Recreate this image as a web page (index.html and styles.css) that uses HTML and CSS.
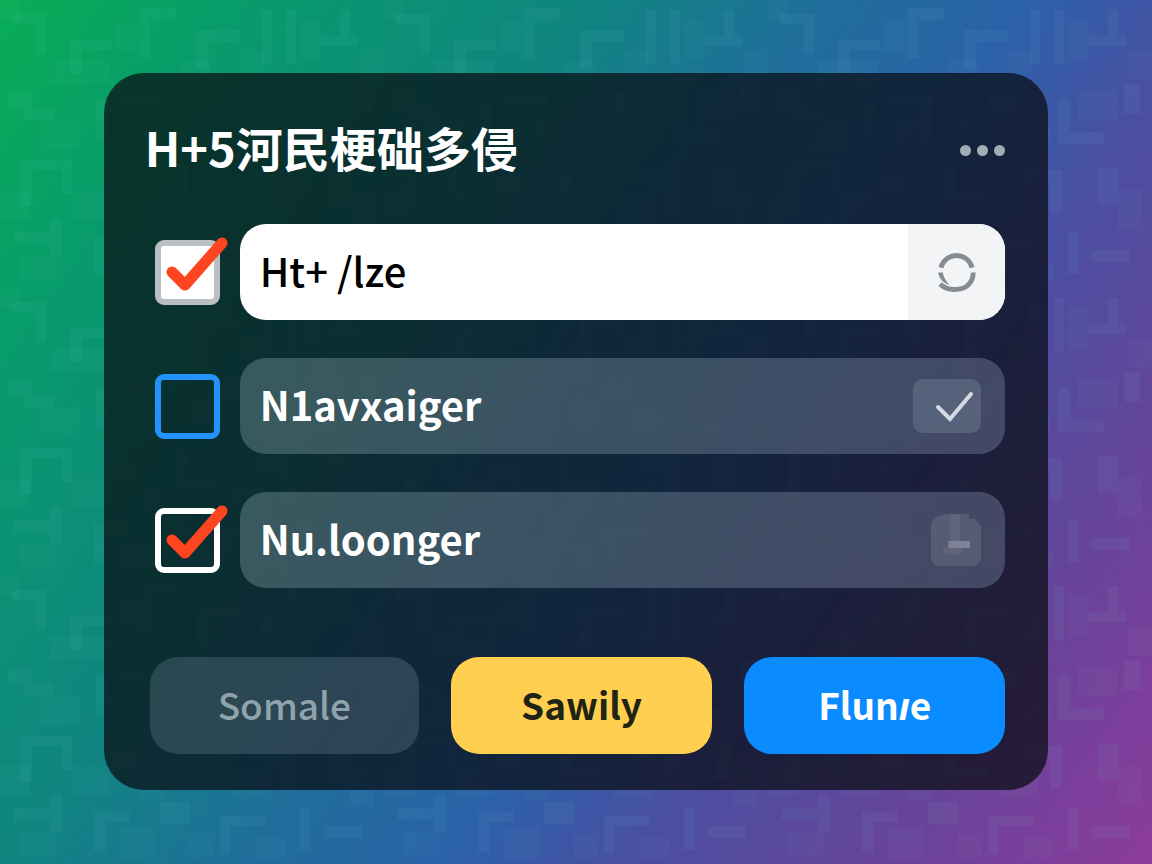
FILE: index.html
```html
<!DOCTYPE html>
<html lang="zh-CN">
<head>
    <meta charset="UTF-8">
    <meta name="viewport" content="width=device-width, initial-scale=1.0">
    <title>H+5河民梗础多侵</title>
    <link rel="stylesheet" href="styles.css">
</head>
<body>
    <!-- Pixel texture behind the card -->
    <svg class="texture" aria-hidden="true" width="100%" height="100%">
        <defs>
            <pattern id="blocks" width="384" height="288" patternUnits="userSpaceOnUse">
                <path opacity=".8" d="M12 14h34v10h-34zM36 24h10v30h-10zM70 40h12v34h-12zM82 40h30v10h-30zM140 8h10v50h-10zM150 8h26v12h-26zM196 30h44v12h-44zM196 42h12v26h-12zM262 10h10v54h-10zM286 10h10v54h-10zM320 36h38v10h-38zM340 10h10v26h-10zM8 92h24v16h-24zM24 108h30v12h-30zM96 100h12v40h-12zM120 96h44v10h-44zM154 106h10v36h-10zM220 92h30v20h-30zM290 100h12v44h-12zM302 132h34v12h-34zM356 84h16v30h-16zM20 160h12v46h-12zM32 160h40v10h-40zM62 170h10v24h-10zM110 176h26v18h-26zM176 164h12v40h-12zM188 192h32v12h-32zM250 170h44v12h-44zM282 182h12v30h-12zM330 168h20v36h-20zM14 232h36v12h-36zM50 220h12v36h-12zM94 236h12v40h-12zM106 236h24v10h-24zM160 226h30v22h-30zM220 240h46v10h-46zM220 250h10v28h-10zM300 232h10v42h-10zM324 250h38v12h-38z"/>
                <path opacity=".4" d="M0 0h20v20h-20zM50 60h60v24h-60zM116 22h24v30h-24zM180 60h30v30h-30zM240 50h24v22h-24zM300 20h20v40h-20zM360 50h24v30h-24zM40 120h40v30h-40zM130 120h24v36h-24zM190 110h30v30h-30zM252 122h30v24h-30zM310 90h40v30h-40zM0 190h30v30h-30zM72 190h38v30h-38zM140 200h24v24h-24zM230 196h40v26h-40zM350 190h24v40h-24zM20 256h36v24h-36zM120 252h36v30h-36zM190 258h24v24h-24zM256 262h30v20h-30z"/>
            </pattern>
        </defs>
        <rect width="100%" height="100%" fill="url(#blocks)"/>
    </svg>

    <main class="card">
        <header class="header">
            <h1>H+5河民梗础多侵</h1>
            <button class="more" type="button" aria-label="More">
                <span></span><span></span><span></span>
            </button>
        </header>

        <form>
            <div class="row">
                <label class="check gray">
                    <input type="checkbox" aria-label="Ht+ /lze" checked>
                    <svg class="tick" viewBox="0 0 80 80" aria-hidden="true"><path d="M17 41L30 54L67 12"/></svg>
                </label>
                <div class="field light">
                    <input type="text" aria-label="First item" value="Ht+ /lze">
                    <button class="side refresh" type="button" aria-label="Refresh">
                        <svg viewBox="0 0 40 40" aria-hidden="true">
                            <path class="arc" d="M4 15A16.500 16.500 0 0 1 36 15M37 20A16 16 0 0 1 22 37Q11 39 3 32"/>
                            <path class="tail" d="M1 20H6Q7 27 13 33Q3 30 1 20z"/>
                        </svg>
                    </button>
                </div>
            </div>

            <div class="row">
                <label class="check blue">
                    <input type="checkbox" aria-label="N1avxaiger">
                    <svg class="tick" viewBox="0 0 80 80" aria-hidden="true"><path d="M17 41L30 54L67 12"/></svg>
                </label>
                <div class="field">
                    <input type="text" aria-label="Second item" value="N1avxaiger">
                    <button class="side confirm" type="button" aria-label="Confirm">
                        <svg viewBox="0 0 68 54" aria-hidden="true"><path d="M25 28L37 40L58 15"/></svg>
                    </button>
                </div>
            </div>

            <div class="row">
                <label class="check white">
                    <input type="checkbox" aria-label="Nu.loonger" checked>
                    <svg class="tick" viewBox="0 0 80 80" aria-hidden="true"><path d="M17 41L30 54L67 12"/></svg>
                </label>
                <div class="field">
                    <input type="text" aria-label="Third item" value="Nu.loonger">
                    <button class="side block" type="button" aria-label="Remove">
                        <svg viewBox="0 0 50 52" aria-hidden="true">
                            <path opacity=".1" d="M6 3L14 0H38V5H44L50 12V46L44 52H5L0 46V8z"/>
                            <path opacity=".06" d="M19 0H29V27H39V34H31V40H12V34H19z"/>
                            <path opacity=".2" d="M17 27H39V34H17z"/>
                        </svg>
                    </button>
                </div>
            </div>

            <div class="actions">
                <button class="btn muted" type="button">Somale</button>
                <button class="btn yellow" type="button">Sawily</button>
                <button class="btn primary" type="submit">Flun<i>ı</i>e</button>
            </div>
        </form>
    </main>
</body>
</html>
```
FILE: styles.css
```css
* {
    box-sizing: border-box;
}

body {
    margin: 0;
    min-height: 100vh;
    padding: 73px 9%;
    font-family: "Noto Sans CJK SC", "Noto Sans", sans-serif;
    color: #fff;
    background: linear-gradient(124deg, #08ad55 0%, #089b6b 14%, #0f8580 34%, #1f6f9a 47%, #2b62a8 59%, #4a4fa3 70%, #644599 83%, #8c3b9c 100%);
}

.texture {
    position: absolute;
    inset: 0;
    fill: rgba(130, 215, 225, 0.08);
    shape-rendering: crispEdges;
}

.card {
    position: relative;
    padding: 41px 43px 36px 41px;
    border-radius: 40px;
    background: rgba(8, 12, 20, 0.72);
}

.header {
    display: flex;
    justify-content: space-between;
    align-items: center;
    height: 72px;
    margin-bottom: 38px;
}

h1 {
    margin: 0;
    padding-bottom: 6px;
    font-size: 47px;
    line-height: 66px;
    font-weight: 700;
}

button,
input {
    font-family: inherit;
    border: none;
    outline: none;
}

button {
    cursor: pointer;
}

.more {
    display: flex;
    gap: 6px;
    padding: 8px 0;
    background: none;
}

.more span {
    width: 11px;
    height: 11px;
    border-radius: 50%;
    background: #a3abb5;
}

.row {
    display: flex;
    align-items: center;
    gap: 20px;
    height: 96px;
    margin: 0 0 38px 10px;
}

/* Checkboxes */
.check {
    position: relative;
    flex: none;
    width: 65px;
    height: 65px;
}

.check input {
    appearance: none;
    display: block;
    width: 100%;
    height: 100%;
    margin: 0;
    border: 6px solid #fff;
    border-radius: 9px;
}

.check.gray input {
    border-color: #b9bfc2;
    background: #fff;
}

.check.blue input {
    border-color: #2492fb;
}

.tick {
    display: none;
    position: absolute;
    left: 0;
    top: -9px;
    width: 80px;
    height: 80px;
    fill: none;
    stroke: #ff4420;
    stroke-width: 11;
    stroke-linecap: round;
    stroke-linejoin: round;
}

.check input:checked + .tick {
    display: block;
}

/* Fields */
.field {
    display: flex;
    flex: 1;
    align-items: center;
    height: 96px;
    overflow: hidden;
    border-radius: 26px;
    background: linear-gradient(100deg, rgba(130, 160, 165, 0.38), rgba(120, 132, 160, 0.42));
}

.field input {
    flex: 1;
    min-width: 0;
    height: 96px;
    padding: 0 20px 4px;
    font-size: 40px;
    font-weight: 700;
    color: #fff;
    background: none;
}

.field.light {
    background: #fff;
}

.field.light input {
    font-weight: 500;
    color: #000;
}

.side {
    flex: none;
    padding: 0;
    background: none;
}

.side svg {
    display: block;
    width: 100%;
    fill: #fff;
}

.refresh {
    width: 97px;
    height: 96px;
    padding: 0 29px;
    background: #f3f4f6;
}

.refresh .arc {
    fill: none;
    stroke: #868c92;
    stroke-width: 5;
}

.refresh .tail {
    fill: #868c92;
}

.confirm {
    width: 68px;
    height: 54px;
    margin-right: 24px;
    border-radius: 10px;
    background: rgba(160, 180, 200, 0.22);
}

.confirm path {
    fill: none;
    stroke: #d5d9e2;
    stroke-width: 4;
    stroke-linecap: round;
}

.block {
    width: 50px;
    margin-right: 24px;
}

/* Bottom buttons */
.actions {
    display: grid;
    grid-template-columns: 33fr 32fr 32fr;
    gap: 32px;
    margin: 69px 0 0 5px;
}

.btn {
    height: 97px;
    padding: 0 0 4px;
    border-radius: 28px;
    font-size: 37px;
    font-weight: 500;
    color: #fff;
}

.btn.muted {
    color: #8fa3ad;
    background: rgba(130, 155, 170, 0.25);
}

.btn.yellow {
    font-weight: 700;
    color: #1f2415;
    background: #ffcf4f;
}

.btn.primary {
    font-weight: 700;
    background: #0a8bff;
}
```
